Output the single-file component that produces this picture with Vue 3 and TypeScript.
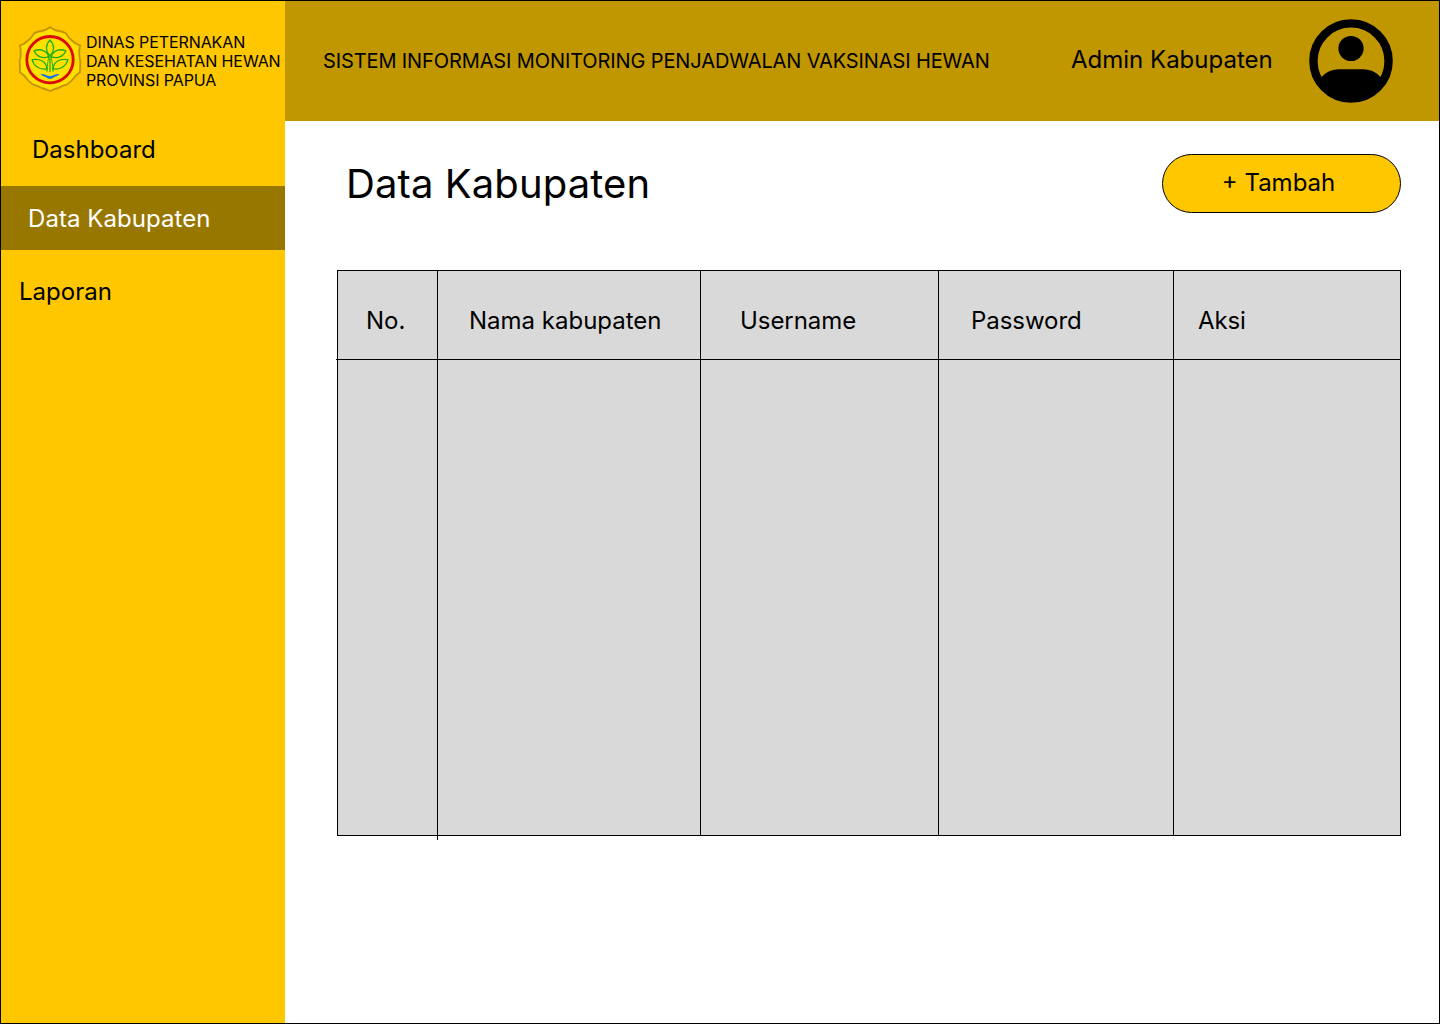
<script setup lang="ts">
interface MenuItem {
  label: string
  key: string
}

const menu: MenuItem[] = [
  { label: 'Dashboard', key: 'dashboard' },
  { label: 'Data Kabupaten', key: 'kabupaten' },
  { label: 'Laporan', key: 'laporan' },
]
const active = 'kabupaten'

const columns: MenuItem[] = [
  { label: 'No.', key: 'no' },
  { label: 'Nama kabupaten', key: 'nama' },
  { label: 'Username', key: 'username' },
  { label: 'Password', key: 'password' },
  { label: 'Aksi', key: 'aksi' },
]
</script>

<template>
  <div class="page">
    <aside class="sidebar">
      <div class="brand">
        <svg class="logo" viewBox="0 0 192 201" aria-hidden="true">
          <path d="M96 4 Q108 13 122 15 Q133 16 144 22 Q150 34 160 42 Q172 54 186 59 Q183 72 184 86 Q184 96 187 106 L186 139 Q174 147 165 159 Q158 168 148 175 Q134 179 121 186 Q109 189 96 195 Q83 189 71 186 Q58 179 44 175 Q34 168 27 159 Q18 147 6 139 L5 106 Q8 96 8 86 Q9 72 6 59 Q20 54 32 42 Q42 34 48 22 Q59 16 70 15 Q84 13 96 4 Z" fill="#ffde00" stroke="#c4930b" stroke-width="5.5" />
          <circle cx="96" cy="101" r="69.5" fill="#ffe100" stroke="#d90b0b" stroke-width="8.5" />
          <g fill="none" stroke="#1cad10" stroke-width="3.8" stroke-linecap="round" stroke-linejoin="round">
            <path d="M96 88 C82 76 82 56 96 42 C110 56 110 76 96 88 Z" />
            <path d="M92 92 C74 99 56 92 48 75 C66 67 86 72 92 92 Z" />
            <path d="M100 92 C118 99 136 92 144 75 C126 67 106 72 100 92 Z" />
            <path d="M87 128 C64 133 47 119 42 101 C64 97 84 105 87 128 Z" />
            <path d="M105 128 C128 133 145 119 150 101 C128 97 108 105 105 128 Z" />
            <path d="M96 88 V137 M87 126 V135 M105 126 V135" />
            <path d="M92 92 L87 126 M100 92 L105 126" stroke-width="2.6" />
          </g>
          <path d="M67 144 Q77 143 84 147 Q96 154 108 147 Q115 143 125 144 Q118 151 108 154 Q96 164 84 154 Q74 151 67 144 Z" fill="#1675e8" />
        </svg>
        <p class="brand-name">DINAS PETERNAKAN<br />DAN KESEHATAN HEWAN<br />PROVINSI PAPUA</p>
      </div>
      <nav class="menu">
        <a v-for="item in menu" :key="item.key" class="menu-item" :class="[item.key, { active: item.key === active }]">{{ item.label }}</a>
      </nav>
    </aside>

    <div class="main">
      <header class="topbar">
        <span class="system">SISTEM INFORMASI MONITORING PENJADWALAN VAKSINASI HEWAN</span>
        <span class="user">Admin Kabupaten</span>
        <svg class="avatar" viewBox="0 0 84 84" aria-hidden="true">
          <circle cx="42" cy="42" r="37.6" fill="none" stroke="#000" stroke-width="8.4" />
          <circle cx="42" cy="29.5" r="12.6" />
          <path d="M10 61.5 C15 53.5 22 50.2 30 50.2 H54 C62 50.2 69 53.5 74 61.5 A38 38 0 0 1 10 61.5 Z" />
        </svg>
      </header>

      <main class="content">
        <div class="heading">
          <h1>Data Kabupaten</h1>
          <button type="button" class="add">+ Tambah</button>
        </div>
        <section class="table">
          <div v-for="col in columns" :key="col.key" class="column" :class="col.key">
            <div class="column-head">{{ col.label }}</div>
          </div>
        </section>
      </main>
    </div>
  </div>
</template>

<style>
body {
  margin: 0;
  background: #fff;
}
</style>

<style scoped>
.page {
  box-sizing: border-box;
  display: flex;
  width: 1440px;
  height: 1024px;
  border: 1px solid #000;
  background: #fff;
  color: #000;
  font-family: Inter, "Liberation Sans", sans-serif;
  font-size: 24px;
  font-weight: 400;
  line-height: 29px;
  overflow: hidden;
}
.sidebar {
  flex: none;
  width: 284px;
  background: #ffc700;
}
.brand {
  display: flex;
  box-sizing: border-box;
  height: 120px;
  padding: 25px 0 0 17px;
}
.logo {
  flex: none;
  width: 64px;
  height: 67px;
}
.brand-name {
  margin: 7px 0 0 4px;
  font-size: 16px;
  letter-spacing: -0.1px;
  line-height: 19px;
  white-space: nowrap;
}
.menu {
  display: flex;
  flex-direction: column;
}
.menu-item {
  box-sizing: border-box;
  height: 64px;
  padding-top: 18px;
}
.menu-item.dashboard {
  height: 65px;
  padding: 14px 0 0 31px;
}
.menu-item.kabupaten {
  padding-left: 27px;
  letter-spacing: 0.06px;
}
.menu-item.laporan {
  padding: 27px 0 0 18px;
}
.menu-item.active {
  background: #987700;
  color: #fff;
}
.main {
  flex: 1;
  min-width: 0;
}
.topbar {
  display: flex;
  box-sizing: border-box;
  height: 120px;
  padding-left: 38px;
  background: #c09700;
  white-space: nowrap;
}
.system {
  width: 748px;
  padding-top: 48px;
  font-size: 20px;
  letter-spacing: -0.115px;
  line-height: 24px;
}
.user {
  width: 238px;
  padding-top: 44px;
}
.avatar {
  flex: none;
  width: 84px;
  height: 84px;
  margin-top: 18px;
}
.content {
  padding: 33px 38px 0 52px;
}
.heading {
  display: flex;
  justify-content: space-between;
  height: 116px;
}
h1 {
  margin: 6px 0 0 9px;
  font-size: 40px;
  font-weight: inherit;
  letter-spacing: 0.1px;
  line-height: 48px;
}
.add {
  box-sizing: border-box;
  width: 239px;
  height: 59px;
  padding: 0 6px 2px 0;
  border: 1px solid #000;
  border-radius: 30px;
  background: #ffc700;
  color: #000;
  font: inherit;
}
.table {
  display: flex;
  box-sizing: border-box;
  width: 1064px;
  height: 566px;
  border: 1px solid #000;
  background: #d9d9d9;
}
.column {
  box-sizing: border-box;
  border-right: 1px solid #000;
}
.column-head {
  box-sizing: border-box;
  height: 89px;
  padding-top: 35px;
  border-bottom: 1px solid #000;
  white-space: nowrap;
}
.column.no {
  width: 100px;
  height: 569px;
}
.column.nama {
  width: 263px;
}
.column.username {
  width: 238px;
}
.column.password {
  width: 235px;
}
.column.aksi {
  flex: 1;
  border-right: 0;
}
.no .column-head {
  margin-left: -2px;
  padding-left: 30px;
}
.nama .column-head {
  padding-left: 31px;
}
.username .column-head {
  padding-left: 39px;
  letter-spacing: -0.05px;
}
.password .column-head {
  padding-left: 32px;
  letter-spacing: -0.05px;
}
.aksi .column-head {
  padding-left: 24px;
  letter-spacing: -0.1px;
}
</style>
